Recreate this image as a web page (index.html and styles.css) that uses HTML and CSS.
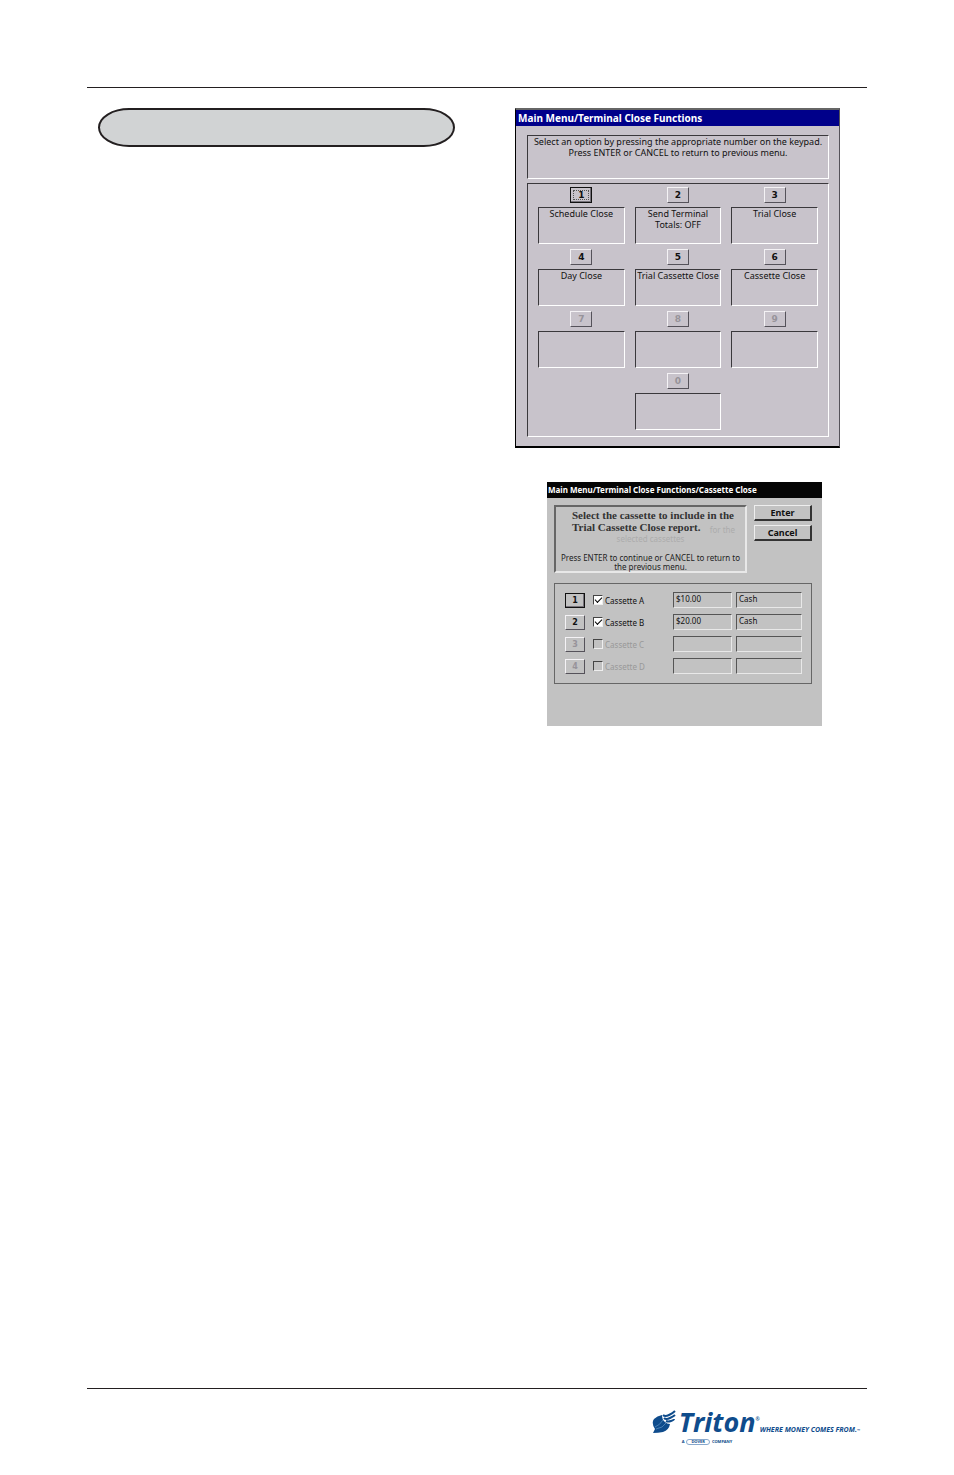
FILE: index.html
```html
<!DOCTYPE html>
<html lang="en">
<head>
<meta charset="utf-8">
<title>Terminal Close Functions</title>
<link rel="stylesheet" href="styles.css">
</head>
<body>
<div class="page">
  <main class="content">
    <div class="heading-pill"></div>
    <div class="figures">
      <section class="window menu-window">
        <h2 class="titlebar">Main Menu/Terminal Close Functions</h2>
        <div class="menu-body">
          <p class="sunken menu-info">Select an option by pressing the appropriate number on the keypad.<br>Press ENTER or CANCEL to return to previous menu.</p>
          <div class="sunken keypad">
            <div class="option"><button class="key focused" aria-labelledby="k1 o1"><span id="k1">1</span></button><div class="sunken label" id="o1">Schedule Close</div></div>
            <div class="option"><button class="key" aria-labelledby="k2 o2"><span id="k2">2</span></button><div class="sunken label" id="o2">Send Terminal<br>Totals: OFF</div></div>
            <div class="option"><button class="key" aria-labelledby="k3 o3"><span id="k3">3</span></button><div class="sunken label" id="o3">Trial Close</div></div>
            <div class="option"><button class="key" aria-labelledby="k4 o4"><span id="k4">4</span></button><div class="sunken label" id="o4">Day Close</div></div>
            <div class="option"><button class="key" aria-labelledby="k5 o5"><span id="k5">5</span></button><div class="sunken label" id="o5">Trial Cassette Close</div></div>
            <div class="option"><button class="key" aria-labelledby="k6 o6"><span id="k6">6</span></button><div class="sunken label" id="o6">Cassette Close</div></div>
            <div class="option"><button class="key" disabled>7</button><div class="sunken label"></div></div>
            <div class="option"><button class="key" disabled>8</button><div class="sunken label"></div></div>
            <div class="option"><button class="key" disabled>9</button><div class="sunken label"></div></div>
            <div class="option middle"><button class="key" disabled>0</button><div class="sunken label"></div></div>
          </div>
        </div>
      </section>

      <section class="window cassette-window">
        <h2 class="titlebar">Main Menu/Terminal Close Functions/Cassette Close</h2>
        <div class="cassette-body">
          <div class="cassette-top">
            <div class="message">
              <p class="overlay">Select the cassette to include in the<br>Trial Cassette Close report.</p>
              <p class="ghost ghost-end">for the</p>
              <p class="ghost">selected cassettes</p>
              <p class="hint">Press ENTER to continue or CANCEL to return to<br>the previous menu.</p>
            </div>
            <div class="actions">
              <button class="action">Enter</button>
              <button class="action">Cancel</button>
            </div>
          </div>
          <div class="cassettes">
            <div class="cassette">
              <button class="key focused">1</button>
              <label class="check"><input type="checkbox" checked>Cassette A</label>
              <input class="field" type="text" value="$10.00" aria-label="Cassette A value">
              <input class="field" type="text" value="Cash" aria-label="Cassette A type">
            </div>
            <div class="cassette">
              <button class="key">2</button>
              <label class="check"><input type="checkbox" checked>Cassette B</label>
              <input class="field" type="text" value="$20.00" aria-label="Cassette B value">
              <input class="field" type="text" value="Cash" aria-label="Cassette B type">
            </div>
            <div class="cassette">
              <button class="key" disabled>3</button>
              <label class="check off"><input type="checkbox" disabled>Cassette C</label>
              <input class="field" type="text" disabled aria-label="Cassette C value">
              <input class="field" type="text" disabled aria-label="Cassette C type">
            </div>
            <div class="cassette">
              <button class="key" disabled>4</button>
              <label class="check off"><input type="checkbox" disabled>Cassette D</label>
              <input class="field" type="text" disabled aria-label="Cassette D value">
              <input class="field" type="text" disabled aria-label="Cassette D type">
            </div>
          </div>
        </div>
      </section>
    </div>
  </main>

  <footer class="footer">
    <div class="brand">
      <svg class="shell" viewBox="0 0 24 24" aria-hidden="true">
        <path fill="#0f4c8c" d="M1 23 L3 19 Q-1 13 2 9 Q5 6 10 5 Q10 10 13 12 Q15 14 18 14 Q17 20 11 22 Q6 23 1 23Z"/>
        <path fill="none" stroke="#0f4c8c" stroke-width="2" d="M11 5 Q13 7 17 5 T23 1 M12 8 Q14 10 18 8 T23 5 M14 11 Q16 12 19 11 T22 9"/>
        <path fill="none" stroke="#5f93c4" stroke-width=".7" d="M4 19 Q11 18 14 13 M3 17 Q8 15 11 10"/>
      </svg>
      <div class="names">
        <div class="name">Triton<span class="reg">®</span></div>
        <div class="sub"><span>A</span><span class="badge">DOVER</span><span>COMPANY</span></div>
      </div>
      <div class="slogan">WHERE MONEY COMES FROM.<span class="tm">™</span></div>
    </div>
  </footer>
</div>
</body>
</html>
```
FILE: styles.css
```css
* { box-sizing: border-box; }
body { margin: 0; background: #fff; color: #111; font-family: "Noto Sans", "Liberation Sans", sans-serif; }
h2, p { margin: 0; }
button, input { font: inherit; color: inherit; padding: 0; margin: 0; border-radius: 0; }

.page { min-height: 100vh; padding: 87px 87px 0; display: flex; flex-direction: column; }
.content { flex: 1; border-top: 1px solid #231f20; padding: 20px 27px 0 11px; display: flex; justify-content: space-between; align-items: flex-start; }
.heading-pill { width: 357px; height: 39px; border: 2px solid #231f20; border-radius: 32px / 20px; background: #d1d3d4; }
.figures { width: 325px; display: flex; flex-direction: column; gap: 34px; }

.titlebar { color: #fff; font-weight: 700; white-space: nowrap; }
.sunken { border: 1px solid; border-color: #3a383c #fff #fff #3a383c; }
.key { display: block; border: 1px solid; border-color: #f4f2f5 #55525a #55525a #f4f2f5; background: transparent; font-weight: 700; text-align: center; }
.key:disabled { color: #97939a; }

.menu-window { background: #c8c3cb; border: 1px solid #000; border-top: 2px solid #666; border-right-color: #55525a; border-bottom-width: 2px; font-size: 9px; line-height: 11px; }
.menu-window .titlebar { background: #00008a; font-size: 10px; line-height: 16px; padding: 0 2px; }
.menu-body { padding: 9px 10px 9px 11px; display: flex; flex-direction: column; gap: 4px; text-align: center; }
.menu-info { height: 44px; white-space: nowrap; }
.keypad { padding: 3px 10px 6px; display: grid; grid-template-columns: repeat(3, 1fr); gap: 5px 10px; }
.option { display: flex; flex-direction: column; align-items: center; gap: 4px; }
.option.middle { grid-column: 2; }
.menu-window .key { width: 22px; height: 16px; font-family: "DejaVu Sans", sans-serif; line-height: 14px; }
.key.focused { border-color: #111; box-shadow: inset -1px -1px #77737b; }
.menu-window .key.focused { outline: 1px dotted #555; outline-offset: -4px; }
.label { width: 100%; height: 37px; white-space: nowrap; }

.cassette-window { width: 275px; margin-left: 32px; background: #c2c2c2; font-size: 8px; line-height: 9px; }
.cassette-window .titlebar { background: #050505; font-size: 8px; line-height: 16px; padding: 0 1px; }
.cassette-body { padding: 7px 10px 42px 7px; }
.cassette-top { display: flex; justify-content: space-between; align-items: flex-start; margin-bottom: 10px; }
.message { width: 193px; height: 68px; border: 2px solid; border-color: #666 #e8e8e8 #e8e8e8 #666; text-align: center; white-space: nowrap; display: grid; grid-template-columns: 1fr auto; grid-template-rows: 12px 13px 11px 1fr; padding-top: 2px; }
.overlay { grid-row: 1 / 3; grid-column: 1; padding-left: 16px; text-align: left; font: 700 11px/12px "Liberation Serif", serif; color: #333; width: 0; }
.ghost { grid-column: 1 / 3; color: #acacac; }
.ghost-end { grid-row: 2; grid-column: 2; padding: 4px 10px 0 0; }
.hint { grid-column: 1 / 3; padding-top: 8px; color: #222; }
.actions { display: flex; flex-direction: column; gap: 4px; }
.action { width: 58px; height: 16px; background: transparent; border: 1px solid; border-color: #eee #333 #333 #eee; border-width: 1px 2px 2px 1px; font-weight: 700; font-size: 9px; line-height: 12px; }
.cassettes { border: 1px solid #666; padding: 8px 9px 9px 10px; display: flex; flex-direction: column; gap: 6px; }
.cassette { display: grid; grid-template-columns: 20px 1fr 59px 66px; column-gap: 4px; height: 16px; align-items: center; }
.cassette .key { width: 20px; height: 15px; line-height: 13px; font-family: "DejaVu Sans", sans-serif; }
.check { display: flex; align-items: center; gap: 2px; padding-left: 4px; }
.check.off { color: #999; }
.check input { appearance: none; width: 10px; height: 10px; border: 1px solid; border-color: #444 #eee #eee #444; display: grid; }
.check input:checked { background: #fff; }
.check input:checked::before { content: ""; width: 6px; height: 3px; margin: 1px; border: solid #000; border-width: 0 0 1px 1px; transform: rotate(-45deg); }
.field { width: 100%; height: 16px; background: transparent; border: 1px solid; border-color: #555 #e8e8e8 #e8e8e8 #555; padding: 0 2px 3px; }

.footer { height: 87px; border-top: 1px solid #231f20; padding: 21px 7px 0; display: flex; justify-content: flex-end; color: #0f4c8c; }
.brand { display: flex; align-items: flex-start; }
.shell { width: 24px; height: 24px; }
.names { padding-left: 3px; }
.name { font: italic 700 27px/24px "Open Sans", sans-serif; display: flex; }
.reg { font-size: 5px; line-height: 18px; }
.sub { display: flex; align-items: center; gap: 2px; margin-top: 5px; padding-left: 3px; font-size: 4px; line-height: 4px; font-weight: 700; }
.badge { border: 1px solid #88a8cc; border-radius: 4px; padding: 0 4px; }
.slogan { padding-top: 16px; font: italic 700 7px/8px "Noto Sans", sans-serif; white-space: nowrap; }
.tm { font-size: 4px; }
```
